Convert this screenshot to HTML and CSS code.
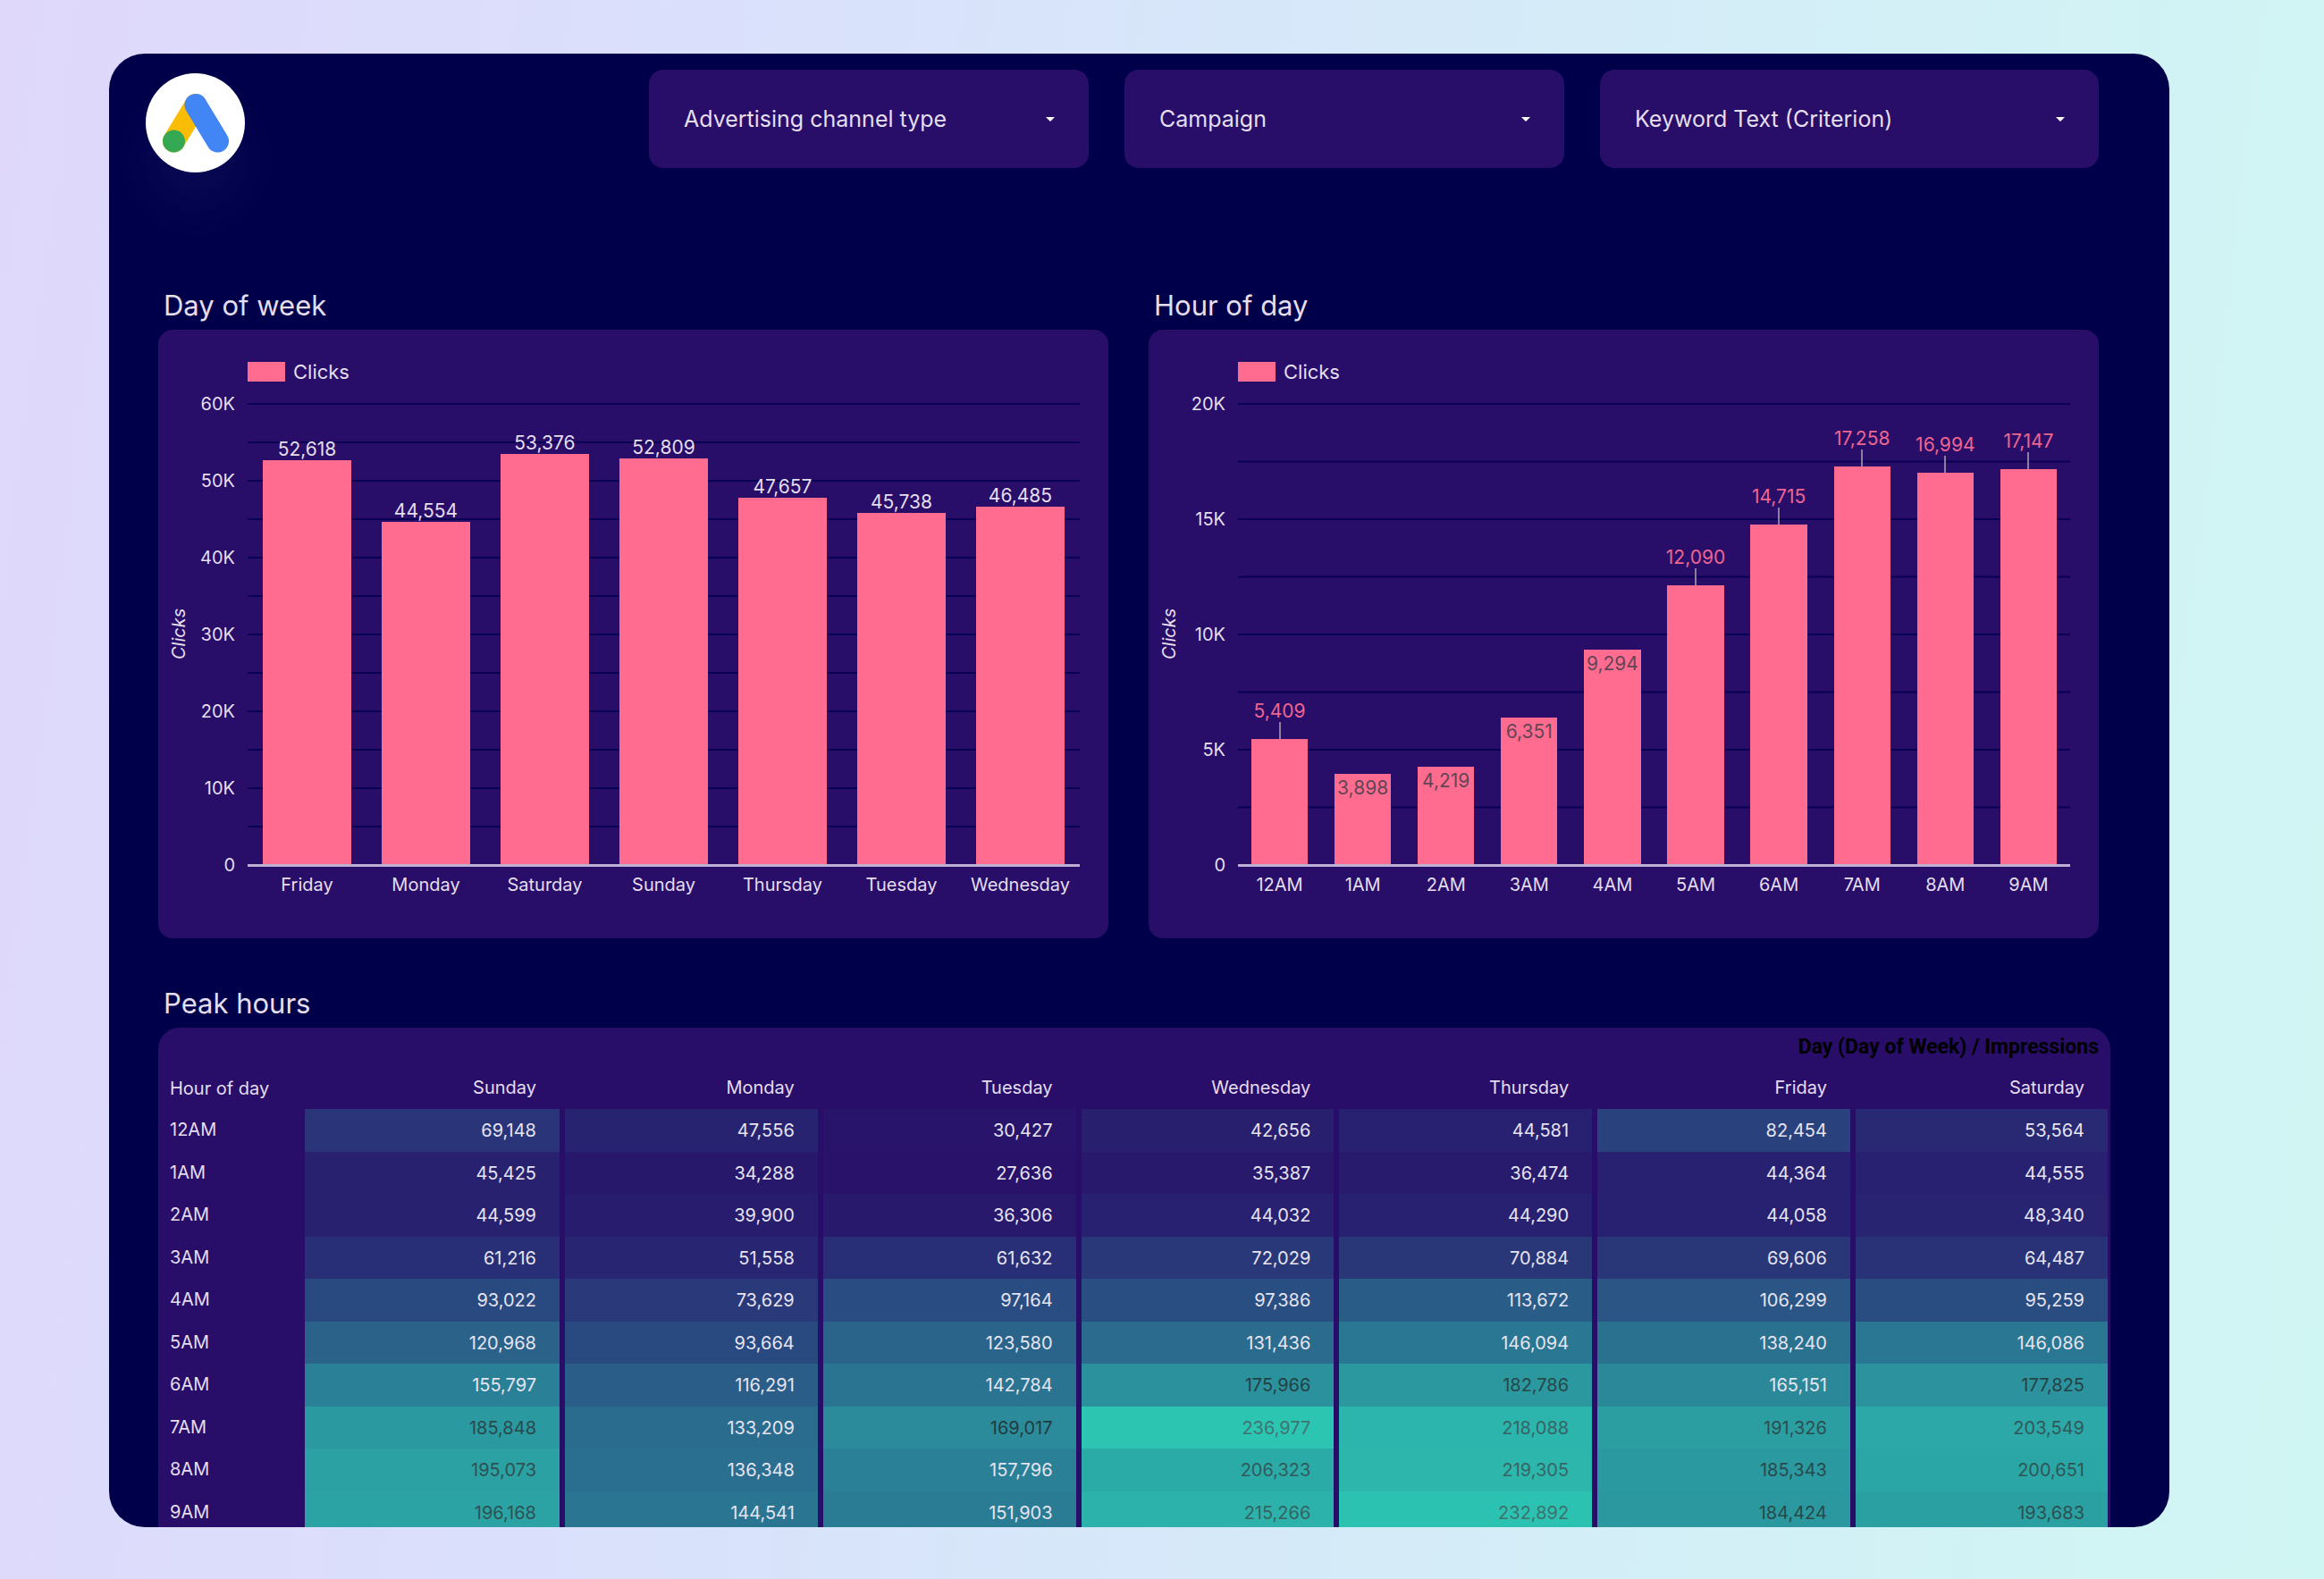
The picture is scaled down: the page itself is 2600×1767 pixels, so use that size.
FILE: index.html
```html
<!DOCTYPE html>
<html lang="en">
<head>
    <meta charset="UTF-8">
    <meta name="viewport" content="width=device-width, initial-scale=1.0">
    <title>Google Ads - Peak hours</title>
    <link rel="stylesheet" href="styles.css">
</head>
<body>
    <main class="report">
        <header class="topbar">
            <div class="logo">
                <svg viewBox="0 0 111 111" role="img" aria-label="Google Ads">
                    <g fill="none" stroke-width="25" stroke-linecap="round">
                        <path d="M31.5 76L56 35.5" stroke="#fbbc04"/>
                        <path d="M56 35.5L80.5 76" stroke="#4285f4"/>
                    </g>
                    <circle cx="31.5" cy="76" r="12.5" fill="#34a853"/>
                </svg>
            </div>
            <div class="filters">
                <div class="filter">
                    <select aria-label="Advertising channel type"><option>Advertising channel type</option></select>
                </div>
                <div class="filter">
                    <select aria-label="Campaign"><option>Campaign</option></select>
                </div>
                <div class="filter filter-wide">
                    <select aria-label="Keyword Text (Criterion)"><option>Keyword Text (Criterion)</option></select>
                </div>
            </div>
        </header>

        <div class="charts">
            <section class="chart-block">
                <h2>Day of week</h2>
                <div class="panel">
                    <div class="legend"><span class="swatch"></span>Clicks</div>
                    <div class="chart">
                        <div class="axis-title">Clicks</div>
                        <div class="ticks">
                            <span>60K</span><span>50K</span><span>40K</span><span>30K</span><span>20K</span><span>10K</span><span>0</span>
                        </div>
                        <div class="plot-area">
                            <div class="plot plot-days" id="days-plot"></div>
                            <div class="labels" id="days-labels"></div>
                        </div>
                    </div>
                </div>
            </section>
            <section class="chart-block">
                <h2>Hour of day</h2>
                <div class="panel">
                    <div class="legend"><span class="swatch"></span>Clicks</div>
                    <div class="chart">
                        <div class="axis-title">Clicks</div>
                        <div class="ticks">
                            <span>20K</span><span>15K</span><span>10K</span><span>5K</span><span>0</span>
                        </div>
                        <div class="plot-area">
                            <div class="plot plot-hours" id="hours-plot"></div>
                            <div class="labels" id="hours-labels"></div>
                        </div>
                    </div>
                </div>
            </section>
        </div>

        <section class="peak">
            <h2>Peak hours</h2>
            <div class="heatmap">
                <table>
                    <colgroup>
                        <col class="col-hour">
                        <col class="col-first">
                        <col span="5">
                        <col class="col-last">
                    </colgroup>
                    <thead>
                        <tr class="metric">
                            <th colspan="8">Day (Day of Week) / Impressions</th>
                        </tr>
                        <tr class="days">
                            <th>Hour of day</th>
                            <th>Sunday</th>
                            <th>Monday</th>
                            <th>Tuesday</th>
                            <th>Wednesday</th>
                            <th>Thursday</th>
                            <th>Friday</th>
                            <th>Saturday</th>
                        </tr>
                    </thead>
                    <tbody id="heat-body"></tbody>
                </table>
            </div>
        </section>
    </main>

    <script src="script.js"></script>
</body>
</html>
```

FILE: styles.css
```css
* {
    box-sizing: border-box;
}
body {
    margin: 0;
    height: 100vh;
    padding: 60px 173px 58px 122px;
    background: linear-gradient(97deg, #dfd8fb 0%, #d9e2fb 35%, #d2f1f6 80%, #d0f6f3 100%);
    font-family: Inter, "Liberation Sans", sans-serif;
    font-size: 20px;
    line-height: 24px;
    color: #e4deee;
}
.report {
    height: 100%;
    overflow: hidden;
    border-radius: 40px;
    background-color: #00004a;
}
h2 {
    margin: 0 0 9px;
    padding-left: 6px;
    font-size: 31px;
    font-weight: 400;
    line-height: 36px;
}

/* top bar */
.topbar {
    display: flex;
    justify-content: space-between;
    align-items: flex-start;
    padding: 18px 79px 0 41px;
}
.logo {
    width: 111px;
    height: 111px;
    margin-top: 4px;
    border-radius: 50%;
    background-color: #fff;
    box-shadow: 0 40px 60px rgba(160, 160, 255, 0.06);
}
.logo svg {
    display: block;
}
.filters {
    display: flex;
    gap: 40px;
}
.filter {
    position: relative;
    width: 492px;
}
.filter-wide {
    width: 558px;
}
.filter select {
    width: 100%;
    height: 110px;
    padding: 0 80px 0 39px;
    border: 0;
    border-radius: 16px;
    background-color: #280d69;
    color: inherit;
    font-family: inherit;
    font-size: 25px;
    appearance: none;
}
.filter::after {
    content: "";
    position: absolute;
    top: 53px;
    right: 38px;
    border: 5px solid transparent;
    border-top-color: #fff;
    border-bottom: 0;
    pointer-events: none;
}

/* charts */
.charts {
    display: flex;
    gap: 45px;
    padding: 131px 79px 0 55px;
}
.chart-block {
    flex: 1;
    min-width: 0;
}
.panel {
    padding: 36px 32px 48px 11px;
    border-radius: 16px;
    background-color: #280d69;
}
.legend {
    display: flex;
    align-items: center;
    gap: 9px;
    height: 22px;
    margin: 0 0 24px 89px;
    font-size: 22px;
}
.swatch {
    width: 42px;
    height: 22px;
    background-color: #ff6c90;
}
.chart {
    display: flex;
}
.axis-title {
    height: 516px;
    width: 24px;
    writing-mode: vertical-rl;
    transform: rotate(180deg);
    text-align: center;
    font-style: italic;
}
.ticks {
    display: flex;
    flex-direction: column;
    justify-content: space-between;
    width: 51px;
    height: 540px;
    margin: -11px 14px 0 0;
    text-align: right;
}
.plot-area {
    flex: 1;
    min-width: 0;
}
.plot {
    display: flex;
    height: 519px;
    border-bottom: 3px solid #bdb0d2;
    background-image: linear-gradient(#0a0052 2px, transparent 2px);
}
.plot-days {
    background-size: 100% calc(100% / 12);
}
.plot-hours {
    background-size: 100% calc(100% / 8);
}
.column {
    flex: 1;
    display: flex;
    flex-direction: column;
    justify-content: flex-end;
    align-items: center;
    font-size: 21px;
}
.bar {
    flex-shrink: 0;
    width: 68%;
    padding-top: 4px;
    background-color: #ff6c90;
    color: #634556;
    text-align: center;
}
.plot-days .bar {
    width: 74%;
}
.outside {
    color: #ee6590;
}
.stem {
    width: 2px;
    height: 19px;
    background-color: #8d7fa3;
}
.labels {
    display: flex;
    margin-top: 8px;
}
.labels span {
    flex: 1;
    text-align: center;
}

/* heatmap */
.peak {
    padding: 55px 66px 0 55px;
}
.heatmap {
    border-radius: 24px 24px 0 0;
    background-color: #280d69;
    overflow: hidden;
}
table {
    width: 100%;
    border-collapse: separate;
    border-spacing: 0;
    table-layout: fixed;
}
.col-hour {
    width: 164px;
}
.col-first {
    width: 291px;
}
.col-last {
    width: 285px;
}
th {
    padding: 0;
    font-weight: 400;
}
.metric th {
    height: 43px;
    padding-right: 13px;
    color: #000;
    font-family: Roboto, sans-serif;
    font-size: 23px;
    font-weight: 700;
    text-align: right;
}
.days th {
    height: 48px;
    padding-right: 32px;
    text-align: right;
}
.days th:first-child {
    padding: 2px 0 0 13px;
    text-align: left;
}
.days th:last-child {
    padding-right: 29px;
}
tbody th {
    padding: 0 0 2px 13px;
    text-align: left;
}
tbody tr {
    height: 48px;
}
tbody tr:nth-child(even) {
    height: 47px;
}
td {
    padding: 0 26px 0 0;
    border-right: 6px solid #280d69;
    text-align: right;
}
td:last-child {
    border-right-width: 3px;
}
```

FILE: script.js
```js
const days = [
    ['Friday', 52618],
    ['Monday', 44554],
    ['Saturday', 53376],
    ['Sunday', 52809],
    ['Thursday', 47657],
    ['Tuesday', 45738],
    ['Wednesday', 46485]
];

// third value: where the label goes
const hours = [
    ['12AM', 5409, 'out'],
    ['1AM', 3898, 'in'],
    ['2AM', 4219, 'in'],
    ['3AM', 6351, 'in'],
    ['4AM', 9294, 'in'],
    ['5AM', 12090, 'out'],
    ['6AM', 14715, 'out'],
    ['7AM', 17258, 'out'],
    ['8AM', 16994, 'out'],
    ['9AM', 17147, 'out']
];

const impressions = [
    ['12AM', 69148, 47556, 30427, 42656, 44581, 82454, 53564],
    ['1AM', 45425, 34288, 27636, 35387, 36474, 44364, 44555],
    ['2AM', 44599, 39900, 36306, 44032, 44290, 44058, 48340],
    ['3AM', 61216, 51558, 61632, 72029, 70884, 69606, 64487],
    ['4AM', 93022, 73629, 97164, 97386, 113672, 106299, 95259],
    ['5AM', 120968, 93664, 123580, 131436, 146094, 138240, 146086],
    ['6AM', 155797, 116291, 142784, 175966, 182786, 165151, 177825],
    ['7AM', 185848, 133209, 169017, 236977, 218088, 191326, 203549],
    ['8AM', 195073, 136348, 157796, 206323, 219305, 185343, 200651],
    ['9AM', 196168, 144541, 151903, 215266, 232892, 184424, 193683]
];

const format = n => n.toLocaleString('en-US');

function drawChart(id, data, max) {
    const plot = document.getElementById(id + '-plot');
    const labels = document.getElementById(id + '-labels');
    data.forEach(([name, value, place]) => {
        const height = value / max * 100;
        let above = `<span>${format(value)}</span>`;
        let inside = '';
        if (place === 'out') {
            above = `<span class="outside">${format(value)}</span><span class="stem"></span>`;
        } else if (place === 'in') {
            above = '';
            inside = format(value);
        }
        plot.innerHTML += `<div class="column">${above}<div class="bar" style="height: ${height}%">${inside}</div></div>`;
        labels.innerHTML += `<span>${name}</span>`;
    });
}

// mix two rgb colours
function mix(a, b, t) {
    return 'rgb(' + a.map((v, i) => Math.round(v + (b[i] - v) * t)).join(', ') + ')';
}

function drawHeatmap() {
    const min = 27636;
    const max = 236977;
    const body = document.getElementById('heat-body');
    impressions.forEach(([hour, ...values]) => {
        const cells = values.map(v => {
            const t = (v - min) / (max - min);
            const back = mix([40, 18, 106], [44, 197, 178], t);
            const text = t < 0.67 ? '#e6e4f0' : mix([32, 58, 62], [64, 116, 114], (t - 0.67) / 0.33);
            return `<td style="background-color: ${back}; color: ${text}">${format(v)}</td>`;
        });
        body.innerHTML += `<tr><th>${hour}</th>${cells.join('')}</tr>`;
    });
}

drawChart('days', days, 60000);
drawChart('hours', hours, 20000);
drawHeatmap();
```
